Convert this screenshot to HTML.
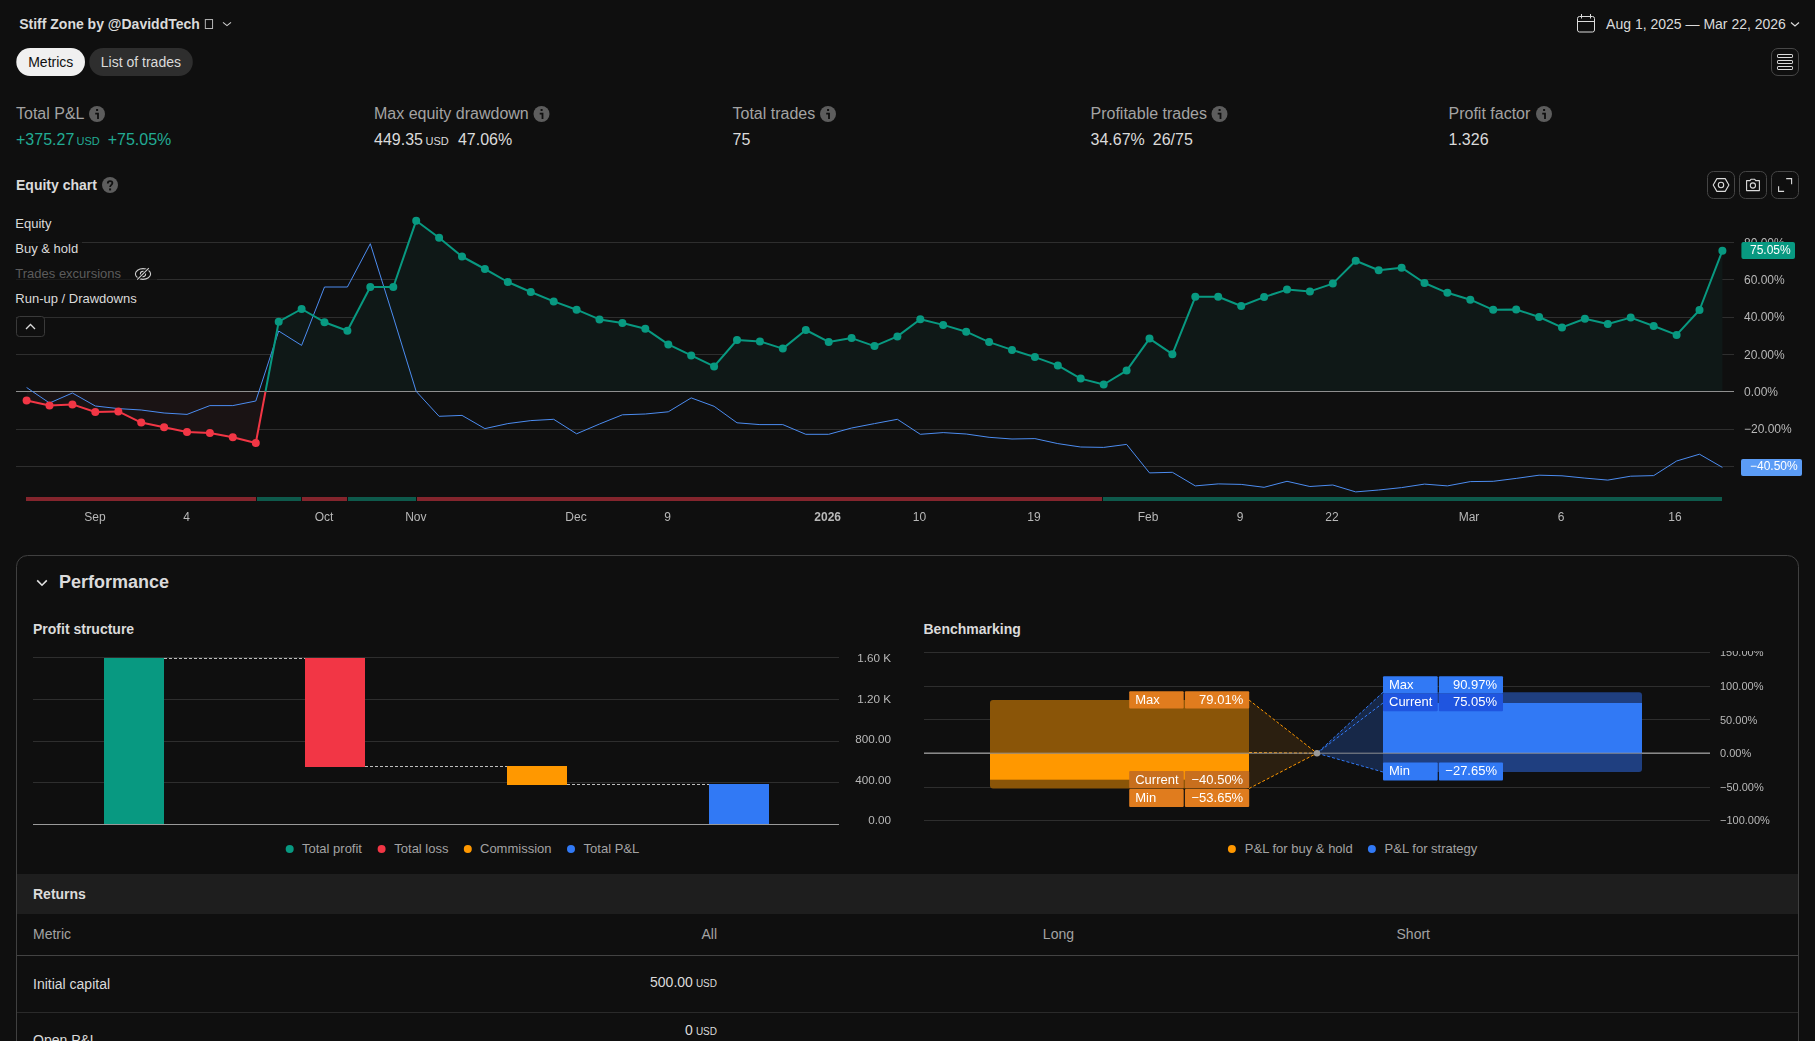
<!DOCTYPE html>
<html><head><meta charset="utf-8">
<style>
html,body{margin:0;padding:0;background:#0f0f0f;width:1815px;height:1041px;overflow:hidden}
svg{position:absolute;left:0;top:0}
text{font-family:"Liberation Sans",sans-serif;white-space:pre}
.ttl{font-size:14px;font-weight:700;fill:#dbdbdb}
.date{font-size:14px;fill:#dbdbdb}
.tab1{font-size:14px;fill:#0f0f0f}
.tab2{font-size:14px;fill:#dbdbdb}
.ml{font-size:16px;fill:#a3a3a3}
.mv{font-size:16px;fill:#dbdbdb}
.mg{font-size:16px;fill:#22ab94}
.usd{font-size:11px}
.eq{font-size:14px;font-weight:700;fill:#dbdbdb}
.lgd{font-size:13px;fill:#dbdbdb}
.lgd2{font-size:13px;fill:#5c5c5c}
.ax{font-size:12px;fill:#b8b8b8}
.ax3{font-size:11.7px;fill:#b8b8b8}
.ax2{font-size:11px;fill:#b8b8b8}
.tag{font-size:12px;fill:#ffffff}
.xl{font-size:12px;fill:#b8b8b8}
.b{font-weight:700}
.perf{font-size:18px;font-weight:700;fill:#dbdbdb}
.sub{font-size:14px;font-weight:700;fill:#dbdbdb}
.lg{font-size:13px;fill:#a3a3a3}
.bl{font-size:13px;fill:#ffffff}
.th{font-size:14px;fill:#a3a3a3}
.td{font-size:14px;fill:#dbdbdb}
.tu{font-size:10px;fill:#dbdbdb}
</style></head>
<body>
<svg width="1815" height="1041" viewBox="0 0 1815 1041">
<!-- header -->
<text x="19.2" y="29.2" class="ttl">Stiff Zone by @DaviddTech</text>
<rect x="205.3" y="19.6" width="7.3" height="8.9" fill="none" stroke="#c8c8c8" stroke-width="0.9"/>
<path d="M223,22.3 L227,25.6 L231,22.3" fill="none" stroke="#cfcfcf" stroke-width="1.1"/>
<!-- calendar -->
<rect x="1577.5" y="16.5" width="17" height="15.5" rx="2" fill="none" stroke="#dbdbdb" stroke-width="1"/>
<line x1="1577.5" y1="21.5" x2="1594.5" y2="21.5" stroke="#dbdbdb"/>
<line x1="1581.5" y1="14" x2="1581.5" y2="18.5" stroke="#dbdbdb"/>
<line x1="1590.5" y1="14" x2="1590.5" y2="18.5" stroke="#dbdbdb"/>
<text x="1606.1" y="28.9" class="date">Aug 1, 2025 — Mar 22, 2026</text>
<path d="M1791,22.5 L1795,26 L1799,22.5" fill="none" stroke="#dbdbdb" stroke-width="1.2"/>
<!-- tabs -->
<rect x="16.3" y="48" width="68.7" height="28" rx="14" fill="#f0f0f0"/>
<text x="28.2" y="66.8" class="tab1">Metrics</text>
<rect x="89.3" y="48" width="103.5" height="28" rx="14" fill="#2e2e2e"/>
<text x="100.8" y="66.8" class="tab2">List of trades</text>
<!-- menu btn -->
<rect x="1771.5" y="48.5" width="27" height="27" rx="6.5" fill="none" stroke="#474747"/>
<rect x="1777.5" y="54.5" width="15" height="3" rx="0.6" fill="none" stroke="#dbdbdb"/>
<rect x="1777.5" y="60.5" width="15" height="3" rx="0.6" fill="none" stroke="#dbdbdb"/>
<rect x="1777.5" y="66.5" width="15" height="3" rx="0.6" fill="none" stroke="#dbdbdb"/>
<!-- metrics -->
<g>
<text x="16" y="119.1" class="ml">Total P&amp;L</text>
<circle cx="97" cy="114" r="8" fill="#5d5d5d"/><rect x="96.1" y="109" width="2" height="2" fill="#0f0f0f"/><path d="M95.2,113.7 H98.0 V119" fill="none" stroke="#0f0f0f" stroke-width="1.8"/>
<text x="16" y="144.6" class="mg">+375.27<tspan class="usd" dx="2.2">USD</tspan><tspan dx="8">+75.05%</tspan></text>
<text x="374" y="119.1" class="ml">Max equity drawdown</text>
<circle cx="541.5" cy="114" r="8" fill="#5d5d5d"/><rect x="540.6" y="109" width="2" height="2" fill="#0f0f0f"/><path d="M539.7,113.7 H542.5 V119" fill="none" stroke="#0f0f0f" stroke-width="1.8"/>
<text x="374" y="144.6" class="mv">449.35<tspan class="usd" dx="2.5">USD</tspan><tspan dx="9.3">47.06%</tspan></text>
<text x="732.5" y="119.1" class="ml">Total trades</text>
<circle cx="828" cy="114" r="8" fill="#5d5d5d"/><rect x="827.1" y="109" width="2" height="2" fill="#0f0f0f"/><path d="M826.2,113.7 H829.0 V119" fill="none" stroke="#0f0f0f" stroke-width="1.8"/>
<text x="732.5" y="144.6" class="mv">75</text>
<text x="1090.5" y="119.1" class="ml">Profitable trades</text>
<circle cx="1219.5" cy="114" r="8" fill="#5d5d5d"/><rect x="1218.6" y="109" width="2" height="2" fill="#0f0f0f"/><path d="M1217.7,113.7 H1220.5 V119" fill="none" stroke="#0f0f0f" stroke-width="1.8"/>
<text x="1090.5" y="144.6" class="mv">34.67%<tspan dx="8">26/75</tspan></text>
<text x="1448.5" y="119.1" class="ml">Profit factor</text>
<circle cx="1544" cy="114" r="8" fill="#5d5d5d"/><rect x="1543.1" y="109" width="2" height="2" fill="#0f0f0f"/><path d="M1542.2,113.7 H1545.0 V119" fill="none" stroke="#0f0f0f" stroke-width="1.8"/>
<text x="1448.5" y="144.6" class="mv">1.326</text>
</g>
<!-- equity chart header -->
<text x="16" y="190" class="eq">Equity chart</text>
<circle cx="110" cy="185" r="8" fill="#5d5d5d"/><path d="M107.8,183.4 C107.8,180.4 112.4,180.4 112.4,183.1 C112.4,184.9 110.1,184.9 110.1,187.1" fill="none" stroke="#0f0f0f" stroke-width="1.8"/><rect x="109.1" y="188.4" width="2" height="2" fill="#0f0f0f"/>
<rect x="1707.5" y="171.5" width="27" height="27" rx="6" fill="none" stroke="#454545"/>
<rect x="1739.5" y="171.5" width="27" height="27" rx="6" fill="none" stroke="#454545"/>
<rect x="1771.5" y="171.5" width="27" height="27" rx="6" fill="none" stroke="#454545"/>
<path d="M1713.2,185 L1716.9,178.6 L1725.2,178.6 L1728.9,185 L1725.2,191.4 L1716.9,191.4 Z" fill="none" stroke="#dbdbdb" stroke-width="1.1" stroke-linejoin="round"/>
<circle cx="1721" cy="185" r="2.7" fill="none" stroke="#dbdbdb" stroke-width="1.1"/>
<path d="M1746.6,180.6 H1750 L1751,179.3 H1754.7 L1755.7,180.6 H1759.4 V190.6 H1746.6 Z" fill="none" stroke="#dbdbdb" stroke-width="1.1" stroke-linejoin="round"/>
<circle cx="1752.9" cy="185.5" r="2.6" fill="none" stroke="#dbdbdb" stroke-width="1.1"/>
<path d="M1786.2,178.6 H1791.6 V184.2 M1778.6,186.2 V191.4 H1784.1" fill="none" stroke="#dbdbdb" stroke-width="1.1"/>
<line x1="16" y1="242.5" x2="1734" y2="242.5" stroke="#2e2e2e" stroke-width="1"/>
<line x1="16" y1="279.5" x2="1734" y2="279.5" stroke="#2e2e2e" stroke-width="1"/>
<line x1="16" y1="317.5" x2="1734" y2="317.5" stroke="#2e2e2e" stroke-width="1"/>
<line x1="16" y1="354.5" x2="1734" y2="354.5" stroke="#2e2e2e" stroke-width="1"/>
<line x1="16" y1="429.5" x2="1734" y2="429.5" stroke="#2e2e2e" stroke-width="1"/>
<line x1="16" y1="466.5" x2="1734" y2="466.5" stroke="#2e2e2e" stroke-width="1"/>
<path d="M26.6,391.5 L26.6,400.4 L49.5,405.4 L72.4,404.4 L95.3,412.0 L118.3,411.4 L141.2,422.6 L164.1,427.3 L187.0,432.0 L209.9,433.0 L232.8,437.3 L255.8,443.0 L265.5,391.5 L265.5,391.5 Z" fill="#1a1314"/>
<path d="M265.5,391.5 L265.5,391.5 L278.7,321.7 L301.6,309.0 L324.5,322.2 L347.4,330.7 L370.3,287.0 L393.3,287.0 L416.2,220.7 L439.1,237.7 L462.0,256.5 L484.9,269.0 L507.8,282.0 L530.8,292.0 L553.7,301.4 L576.6,309.7 L599.5,319.4 L622.4,323.0 L645.3,328.7 L668.3,344.4 L691.2,355.4 L714.1,366.4 L737.0,340.0 L759.9,341.4 L782.8,348.6 L805.8,330.0 L828.7,341.9 L851.6,338.1 L874.5,346.1 L897.4,336.4 L920.3,319.2 L943.2,324.9 L966.2,331.7 L989.1,342.1 L1012.0,349.9 L1034.9,357.1 L1057.8,365.4 L1080.7,378.6 L1103.7,384.5 L1126.6,370.6 L1149.5,338.6 L1172.4,354.2 L1195.3,296.8 L1218.2,296.8 L1241.2,306.0 L1264.1,297.1 L1287.0,289.6 L1309.9,291.4 L1332.8,283.6 L1355.7,260.8 L1378.7,270.2 L1401.6,267.7 L1424.5,283.0 L1447.4,292.8 L1470.3,299.7 L1493.2,309.8 L1516.2,309.5 L1539.1,317.0 L1562.0,327.4 L1584.9,318.7 L1607.8,324.0 L1630.7,317.6 L1653.7,326.0 L1676.6,334.9 L1699.5,310.0 L1722.4,250.7 L1722.4,391.5 Z" fill="#0f1817"/>
<line x1="16" y1="391.5" x2="1734" y2="391.5" stroke="#8f8f8f" stroke-width="1"/>
<path d="M26.6,387.5 L49.5,403.0 L72.4,393.0 L95.3,406.0 L118.3,408.6 L141.2,410.0 L164.1,413.0 L187.0,414.4 L209.9,405.6 L232.8,405.6 L255.8,401.0 L278.7,331.0 L301.6,345.4 L324.5,287.0 L347.4,287.0 L370.3,243.7 L393.3,317.0 L416.2,391.4 L439.1,416.3 L462.0,415.4 L484.9,428.6 L507.8,423.6 L530.8,420.6 L553.7,419.3 L576.6,433.8 L599.5,424.0 L622.4,414.8 L645.3,414.0 L668.3,411.8 L691.2,397.9 L714.1,406.3 L737.0,422.8 L759.9,424.6 L782.8,424.6 L805.8,434.3 L828.7,434.3 L851.6,428.0 L874.5,423.6 L897.4,419.3 L920.3,434.3 L943.2,432.6 L966.2,434.0 L989.1,437.3 L1012.0,439.0 L1034.9,438.6 L1057.8,443.6 L1080.7,447.0 L1103.7,447.4 L1126.6,444.4 L1149.5,472.9 L1172.4,472.3 L1195.3,485.9 L1218.2,483.9 L1241.2,484.4 L1264.1,487.3 L1287.0,481.3 L1309.9,486.5 L1332.8,485.0 L1355.7,491.9 L1378.7,490.0 L1401.6,487.6 L1424.5,484.1 L1447.4,485.9 L1470.3,481.6 L1493.2,481.3 L1516.2,478.4 L1539.1,475.2 L1562.0,475.8 L1584.9,478.1 L1607.8,480.1 L1630.7,476.2 L1653.7,475.6 L1676.6,461.0 L1699.5,454.2 L1722.4,467.4" fill="none" stroke="#4c8cf0" stroke-width="1" stroke-linejoin="round"/>
<path d="M26.6,400.4 L49.5,405.4 L72.4,404.4 L95.3,412.0 L118.3,411.4 L141.2,422.6 L164.1,427.3 L187.0,432.0 L209.9,433.0 L232.8,437.3 L255.8,443.0 L265.5,391.5" fill="none" stroke="#f23645" stroke-width="2" stroke-linejoin="round"/>
<path d="M265.5,391.5 L278.7,321.7 L301.6,309.0 L324.5,322.2 L347.4,330.7 L370.3,287.0 L393.3,287.0 L416.2,220.7 L439.1,237.7 L462.0,256.5 L484.9,269.0 L507.8,282.0 L530.8,292.0 L553.7,301.4 L576.6,309.7 L599.5,319.4 L622.4,323.0 L645.3,328.7 L668.3,344.4 L691.2,355.4 L714.1,366.4 L737.0,340.0 L759.9,341.4 L782.8,348.6 L805.8,330.0 L828.7,341.9 L851.6,338.1 L874.5,346.1 L897.4,336.4 L920.3,319.2 L943.2,324.9 L966.2,331.7 L989.1,342.1 L1012.0,349.9 L1034.9,357.1 L1057.8,365.4 L1080.7,378.6 L1103.7,384.5 L1126.6,370.6 L1149.5,338.6 L1172.4,354.2 L1195.3,296.8 L1218.2,296.8 L1241.2,306.0 L1264.1,297.1 L1287.0,289.6 L1309.9,291.4 L1332.8,283.6 L1355.7,260.8 L1378.7,270.2 L1401.6,267.7 L1424.5,283.0 L1447.4,292.8 L1470.3,299.7 L1493.2,309.8 L1516.2,309.5 L1539.1,317.0 L1562.0,327.4 L1584.9,318.7 L1607.8,324.0 L1630.7,317.6 L1653.7,326.0 L1676.6,334.9 L1699.5,310.0 L1722.4,250.7" fill="none" stroke="#089981" stroke-width="2" stroke-linejoin="round"/>
<circle cx="26.6" cy="400.4" r="4" fill="#f23645"/>
<circle cx="49.5" cy="405.4" r="4" fill="#f23645"/>
<circle cx="72.4" cy="404.4" r="4" fill="#f23645"/>
<circle cx="95.3" cy="412.0" r="4" fill="#f23645"/>
<circle cx="118.3" cy="411.4" r="4" fill="#f23645"/>
<circle cx="141.2" cy="422.6" r="4" fill="#f23645"/>
<circle cx="164.1" cy="427.3" r="4" fill="#f23645"/>
<circle cx="187.0" cy="432.0" r="4" fill="#f23645"/>
<circle cx="209.9" cy="433.0" r="4" fill="#f23645"/>
<circle cx="232.8" cy="437.3" r="4" fill="#f23645"/>
<circle cx="255.8" cy="443.0" r="4" fill="#f23645"/>
<circle cx="278.7" cy="321.7" r="4" fill="#089981"/>
<circle cx="301.6" cy="309.0" r="4" fill="#089981"/>
<circle cx="324.5" cy="322.2" r="4" fill="#089981"/>
<circle cx="347.4" cy="330.7" r="4" fill="#089981"/>
<circle cx="370.3" cy="287.0" r="4" fill="#089981"/>
<circle cx="393.3" cy="287.0" r="4" fill="#089981"/>
<circle cx="416.2" cy="220.7" r="4" fill="#089981"/>
<circle cx="439.1" cy="237.7" r="4" fill="#089981"/>
<circle cx="462.0" cy="256.5" r="4" fill="#089981"/>
<circle cx="484.9" cy="269.0" r="4" fill="#089981"/>
<circle cx="507.8" cy="282.0" r="4" fill="#089981"/>
<circle cx="530.8" cy="292.0" r="4" fill="#089981"/>
<circle cx="553.7" cy="301.4" r="4" fill="#089981"/>
<circle cx="576.6" cy="309.7" r="4" fill="#089981"/>
<circle cx="599.5" cy="319.4" r="4" fill="#089981"/>
<circle cx="622.4" cy="323.0" r="4" fill="#089981"/>
<circle cx="645.3" cy="328.7" r="4" fill="#089981"/>
<circle cx="668.3" cy="344.4" r="4" fill="#089981"/>
<circle cx="691.2" cy="355.4" r="4" fill="#089981"/>
<circle cx="714.1" cy="366.4" r="4" fill="#089981"/>
<circle cx="737.0" cy="340.0" r="4" fill="#089981"/>
<circle cx="759.9" cy="341.4" r="4" fill="#089981"/>
<circle cx="782.8" cy="348.6" r="4" fill="#089981"/>
<circle cx="805.8" cy="330.0" r="4" fill="#089981"/>
<circle cx="828.7" cy="341.9" r="4" fill="#089981"/>
<circle cx="851.6" cy="338.1" r="4" fill="#089981"/>
<circle cx="874.5" cy="346.1" r="4" fill="#089981"/>
<circle cx="897.4" cy="336.4" r="4" fill="#089981"/>
<circle cx="920.3" cy="319.2" r="4" fill="#089981"/>
<circle cx="943.2" cy="324.9" r="4" fill="#089981"/>
<circle cx="966.2" cy="331.7" r="4" fill="#089981"/>
<circle cx="989.1" cy="342.1" r="4" fill="#089981"/>
<circle cx="1012.0" cy="349.9" r="4" fill="#089981"/>
<circle cx="1034.9" cy="357.1" r="4" fill="#089981"/>
<circle cx="1057.8" cy="365.4" r="4" fill="#089981"/>
<circle cx="1080.7" cy="378.6" r="4" fill="#089981"/>
<circle cx="1103.7" cy="384.5" r="4" fill="#089981"/>
<circle cx="1126.6" cy="370.6" r="4" fill="#089981"/>
<circle cx="1149.5" cy="338.6" r="4" fill="#089981"/>
<circle cx="1172.4" cy="354.2" r="4" fill="#089981"/>
<circle cx="1195.3" cy="296.8" r="4" fill="#089981"/>
<circle cx="1218.2" cy="296.8" r="4" fill="#089981"/>
<circle cx="1241.2" cy="306.0" r="4" fill="#089981"/>
<circle cx="1264.1" cy="297.1" r="4" fill="#089981"/>
<circle cx="1287.0" cy="289.6" r="4" fill="#089981"/>
<circle cx="1309.9" cy="291.4" r="4" fill="#089981"/>
<circle cx="1332.8" cy="283.6" r="4" fill="#089981"/>
<circle cx="1355.7" cy="260.8" r="4" fill="#089981"/>
<circle cx="1378.7" cy="270.2" r="4" fill="#089981"/>
<circle cx="1401.6" cy="267.7" r="4" fill="#089981"/>
<circle cx="1424.5" cy="283.0" r="4" fill="#089981"/>
<circle cx="1447.4" cy="292.8" r="4" fill="#089981"/>
<circle cx="1470.3" cy="299.7" r="4" fill="#089981"/>
<circle cx="1493.2" cy="309.8" r="4" fill="#089981"/>
<circle cx="1516.2" cy="309.5" r="4" fill="#089981"/>
<circle cx="1539.1" cy="317.0" r="4" fill="#089981"/>
<circle cx="1562.0" cy="327.4" r="4" fill="#089981"/>
<circle cx="1584.9" cy="318.7" r="4" fill="#089981"/>
<circle cx="1607.8" cy="324.0" r="4" fill="#089981"/>
<circle cx="1630.7" cy="317.6" r="4" fill="#089981"/>
<circle cx="1653.7" cy="326.0" r="4" fill="#089981"/>
<circle cx="1676.6" cy="334.9" r="4" fill="#089981"/>
<circle cx="1699.5" cy="310.0" r="4" fill="#089981"/>
<circle cx="1722.4" cy="250.7" r="4" fill="#089981"/>
<rect x="26" y="497" width="230" height="4" fill="#84252d"/>
<rect x="257" y="497" width="44" height="4" fill="#0e5a4c"/>
<rect x="302" y="497" width="45" height="4" fill="#84252d"/>
<rect x="348" y="497" width="68" height="4" fill="#0e5a4c"/>
<rect x="417" y="497" width="685" height="4" fill="#84252d"/>
<rect x="1103" y="497" width="619" height="4" fill="#0e5a4c"/>
<!-- legend -->
<rect x="10" y="212" width="46" height="22" fill="#0f0f0f" fill-opacity="0.85"/>
<rect x="10" y="237" width="72" height="22" fill="#0f0f0f" fill-opacity="0.85"/>
<rect x="10" y="262" width="147" height="22" fill="#0f0f0f" fill-opacity="0.6"/>
<rect x="10" y="287" width="131" height="22" fill="#0f0f0f" fill-opacity="0.85"/>
<text x="15.3" y="228.1" class="lgd">Equity</text>
<text x="15.3" y="253.1" class="lgd">Buy &amp; hold</text>
<text x="15.3" y="278.1" class="lgd2">Trades excursions</text>
<ellipse cx="143" cy="274" rx="7.6" ry="5.4" fill="none" stroke="#cfcfcf" stroke-width="1.1"/>
<circle cx="143" cy="274" r="2.6" fill="none" stroke="#cfcfcf" stroke-width="1.1"/>
<line x1="137" y1="280" x2="149" y2="268" stroke="#0f0f0f" stroke-width="3"/>
<line x1="137.2" y1="279.6" x2="148.8" y2="268.2" stroke="#cfcfcf" stroke-width="1.1"/>
<text x="15.3" y="303.1" class="lgd">Run-up / Drawdowns</text>
<rect x="16.5" y="316.5" width="28" height="20" rx="3" fill="#0f0f0f" stroke="#3a3a3a"/>
<path d="M26,329 L30.5,324.5 L35,329" fill="none" stroke="#dbdbdb" stroke-width="1.3"/>
<!-- performance card -->
<rect x="16.5" y="555.5" width="1782" height="600" rx="11" fill="none" stroke="#404040"/>
<path d="M37.2,580.4 L42,585.2 L46.8,580.4" fill="none" stroke="#e0e0e0" stroke-width="1.6"/>
<text x="59" y="587.8" class="perf">Performance</text>
<text x="33" y="634.3" class="sub">Profit structure</text>
<text x="923.5" y="634.3" class="sub">Benchmarking</text>
<line x1="33" y1="657.5" x2="839" y2="657.5" stroke="#2e2e2e"/>
<line x1="33" y1="699.5" x2="839" y2="699.5" stroke="#2e2e2e"/>
<line x1="33" y1="741.5" x2="839" y2="741.5" stroke="#2e2e2e"/>
<line x1="33" y1="782.5" x2="839" y2="782.5" stroke="#2e2e2e"/>
<line x1="33" y1="824.5" x2="839" y2="824.5" stroke="#9a9a9a"/>
<rect x="104" y="658" width="60" height="166" fill="#089981"/>
<rect x="305" y="658" width="60" height="109" fill="#f23645"/>
<rect x="507" y="766" width="60" height="19" fill="#ff9800"/>
<rect x="709" y="784" width="60" height="40" fill="#3179f5"/>
<line x1="164" y1="658.5" x2="305" y2="658.5" stroke="#bdbdbd" stroke-dasharray="3 2"/>
<line x1="365" y1="766.5" x2="507" y2="766.5" stroke="#bdbdbd" stroke-dasharray="3 2"/>
<line x1="567" y1="784.5" x2="709" y2="784.5" stroke="#bdbdbd" stroke-dasharray="3 2"/>
<circle cx="289.7" cy="849" r="4" fill="#089981"/>
<text x="302" y="852.8" class="lg">Total profit</text>
<circle cx="381.6" cy="849" r="4" fill="#f23645"/>
<text x="394.3" y="852.8" class="lg">Total loss</text>
<circle cx="467.8" cy="849" r="4" fill="#ff9800"/>
<text x="480" y="852.8" class="lg">Commission</text>
<circle cx="571" cy="849" r="4" fill="#3179f5"/>
<text x="583.6" y="852.8" class="lg">Total P&amp;L</text>
<line x1="924" y1="652.5" x2="1710" y2="652.5" stroke="#2e2e2e"/>
<line x1="924" y1="686.5" x2="1710" y2="686.5" stroke="#2e2e2e"/>
<line x1="924" y1="719.5" x2="1710" y2="719.5" stroke="#2e2e2e"/>
<line x1="924" y1="787.5" x2="1710" y2="787.5" stroke="#2e2e2e"/>
<line x1="924" y1="820.5" x2="1710" y2="820.5" stroke="#2e2e2e"/>
<line x1="924" y1="753.2" x2="1710" y2="753.2" stroke="#9a9a9a"/>
<path d="M1249,700 L1317,753.2 L1249,788.5 Z" fill="#2b1f10"/>
<path d="M1249,700 L1317,753.2 M1249,788.5 L1317,753.2 M1249,752.5 L1317,753.2" stroke="#ff9800" stroke-dasharray="3 2" fill="none"/>
<path d="M1383,692.3 L1317,753.2 L1383,772 Z" fill="#172848"/>
<path d="M1383,692.3 L1317,753.2 M1383,772 L1317,753.2 M1383,703 L1317,753.2" stroke="#3179f5" stroke-dasharray="3 2" fill="none"/>
<rect x="990" y="700" width="259" height="88.5" rx="3" fill="#8a5508"/>
<rect x="990" y="753.5" width="259" height="26.2" fill="#ff9800"/>
<rect x="1383" y="692.3" width="259" height="79.6" rx="3" fill="#1f3f80"/>
<rect x="1383" y="703" width="259" height="50" fill="#3179f5"/>
<line x1="924" y1="753.2" x2="1710" y2="753.2" stroke="#9a9a9a" stroke-opacity="0.9"/>
<circle cx="1317" cy="753.2" r="3.2" fill="#9a9a9a"/>
<circle cx="1231.9" cy="849" r="4" fill="#ff9800"/>
<text x="1244.8" y="852.8" class="lg">P&amp;L for buy &amp; hold</text>
<circle cx="1371.9" cy="849" r="4" fill="#3179f5"/>
<text x="1384.6" y="852.8" class="lg">P&amp;L for strategy</text>
<!-- returns -->
<rect x="17" y="874" width="1781" height="40" fill="#1e1e1e"/>
<text x="33" y="899" class="sub">Returns</text>
<text x="33" y="939" class="th">Metric</text>
<text x="717" y="939" text-anchor="end" class="th">All</text>
<text x="1074" y="939" text-anchor="end" class="th">Long</text>
<text x="1430" y="939" text-anchor="end" class="th">Short</text>
<line x1="17" y1="955.5" x2="1798" y2="955.5" stroke="#434343"/>
<text x="33" y="989" class="td">Initial capital</text>
<text x="717" y="987" text-anchor="end" class="td">500.00<tspan class="tu" dx="3">USD</tspan></text>
<line x1="17" y1="1012.5" x2="1798" y2="1012.5" stroke="#2a2a2a"/>
<text x="33" y="1045" class="td">Open P&amp;L</text>
<text x="717" y="1035" text-anchor="end" class="td">0<tspan class="tu" dx="3">USD</tspan></text>
</svg>
<svg width="1815" height="1041" viewBox="0 0 1815 1041" style="will-change:transform">
<text x="1744" y="246.6" class="ax">80.00%</text>
<text x="1744" y="283.9" class="ax">60.00%</text>
<text x="1744" y="321.2" class="ax">40.00%</text>
<text x="1744" y="358.6" class="ax">20.00%</text>
<text x="1744" y="395.9" class="ax">0.00%</text>
<text x="1744" y="433.2" class="ax">−20.00%</text>
<text x="1744" y="470.6" class="ax">−40.00%</text>
<rect x="1741.4" y="242" width="53.6" height="17" rx="2" fill="#089981"/>
<text x="1750" y="253.8" class="tag">75.05%</text>
<rect x="1741" y="459" width="61" height="17" rx="2" fill="#5b9cf6"/>
<text x="1750" y="470.4" class="tag">−40.50%</text>
<text x="95" y="521" text-anchor="middle" class="xl">Sep</text>
<text x="186.7" y="521" text-anchor="middle" class="xl">4</text>
<text x="324" y="521" text-anchor="middle" class="xl">Oct</text>
<text x="415.8" y="521" text-anchor="middle" class="xl">Nov</text>
<text x="576" y="521" text-anchor="middle" class="xl">Dec</text>
<text x="667.6" y="521" text-anchor="middle" class="xl">9</text>
<text x="827.7" y="521" text-anchor="middle" class="xl b">2026</text>
<text x="919.5" y="521" text-anchor="middle" class="xl">10</text>
<text x="1034" y="521" text-anchor="middle" class="xl">19</text>
<text x="1148" y="521" text-anchor="middle" class="xl">Feb</text>
<text x="1240" y="521" text-anchor="middle" class="xl">9</text>
<text x="1332" y="521" text-anchor="middle" class="xl">22</text>
<text x="1469" y="521" text-anchor="middle" class="xl">Mar</text>
<text x="1561" y="521" text-anchor="middle" class="xl">6</text>
<text x="1675" y="521" text-anchor="middle" class="xl">16</text>
<text x="891" y="661.7" text-anchor="end" class="ax3">1.60 K</text>
<text x="891" y="702.7" text-anchor="end" class="ax3">1.20 K</text>
<text x="891" y="742.7" text-anchor="end" class="ax3">800.00</text>
<text x="891" y="783.7" text-anchor="end" class="ax3">400.00</text>
<text x="891" y="823.7" text-anchor="end" class="ax3">0.00</text>
<defs><clipPath id="clip150"><rect x="1700" y="651" width="100" height="20"/></clipPath></defs>
<rect x="1129.2" y="691.3" width="54.5" height="17.3" fill="#e07c1e" rx="1"/>
<rect x="1184.9" y="691.3" width="64.3" height="17.3" fill="#e07c1e" rx="1"/>
<text x="1135.2" y="703.8499999999999" class="bl">Max</text>
<text x="1243.2" y="703.8499999999999" text-anchor="end" class="bl">79.01%</text>
<rect x="1129.2" y="771.1" width="54.5" height="17.2" fill="#c86f1e" rx="1"/>
<rect x="1184.9" y="771.1" width="64.3" height="17.2" fill="#c86f1e" rx="1"/>
<text x="1135.2" y="783.6" class="bl">Current</text>
<text x="1243.2" y="783.6" text-anchor="end" class="bl">−40.50%</text>
<rect x="1129.2" y="789" width="54.5" height="18" fill="#e07c1e" rx="1"/>
<rect x="1184.9" y="789" width="64.3" height="18" fill="#e07c1e" rx="1"/>
<text x="1135.2" y="801.9" class="bl">Min</text>
<text x="1243.2" y="801.9" text-anchor="end" class="bl">−53.65%</text>
<rect x="1383" y="676.3" width="54.7" height="17.1" fill="#3179f5" rx="1"/>
<rect x="1438.9" y="676.3" width="64.1" height="17.1" fill="#3179f5" rx="1"/>
<text x="1389" y="688.7499999999999" class="bl">Max</text>
<text x="1497.0" y="688.7499999999999" text-anchor="end" class="bl">90.97%</text>
<rect x="1383" y="693.6" width="54.7" height="17.6" fill="#1f55e0" rx="1"/>
<rect x="1438.9" y="693.6" width="64.1" height="17.6" fill="#1f55e0" rx="1"/>
<text x="1389" y="706.3" class="bl">Current</text>
<text x="1497.0" y="706.3" text-anchor="end" class="bl">75.05%</text>
<rect x="1383" y="762.5" width="54.7" height="17.9" fill="#3179f5" rx="1"/>
<rect x="1438.9" y="762.5" width="64.1" height="17.9" fill="#3179f5" rx="1"/>
<text x="1389" y="775.35" class="bl">Min</text>
<text x="1497.0" y="775.35" text-anchor="end" class="bl">−27.65%</text>
<text x="1720" y="656.3" class="ax2" clip-path="url(#clip150)">150.00%</text>
<text x="1720" y="690.0" class="ax2">100.00%</text>
<text x="1720" y="723.6999999999999" class="ax2">50.00%</text>
<text x="1720" y="757.1" class="ax2">0.00%</text>
<text x="1720" y="790.9" class="ax2">−50.00%</text>
<text x="1720" y="824.3" class="ax2">−100.00%</text>
</svg>
</body></html>
